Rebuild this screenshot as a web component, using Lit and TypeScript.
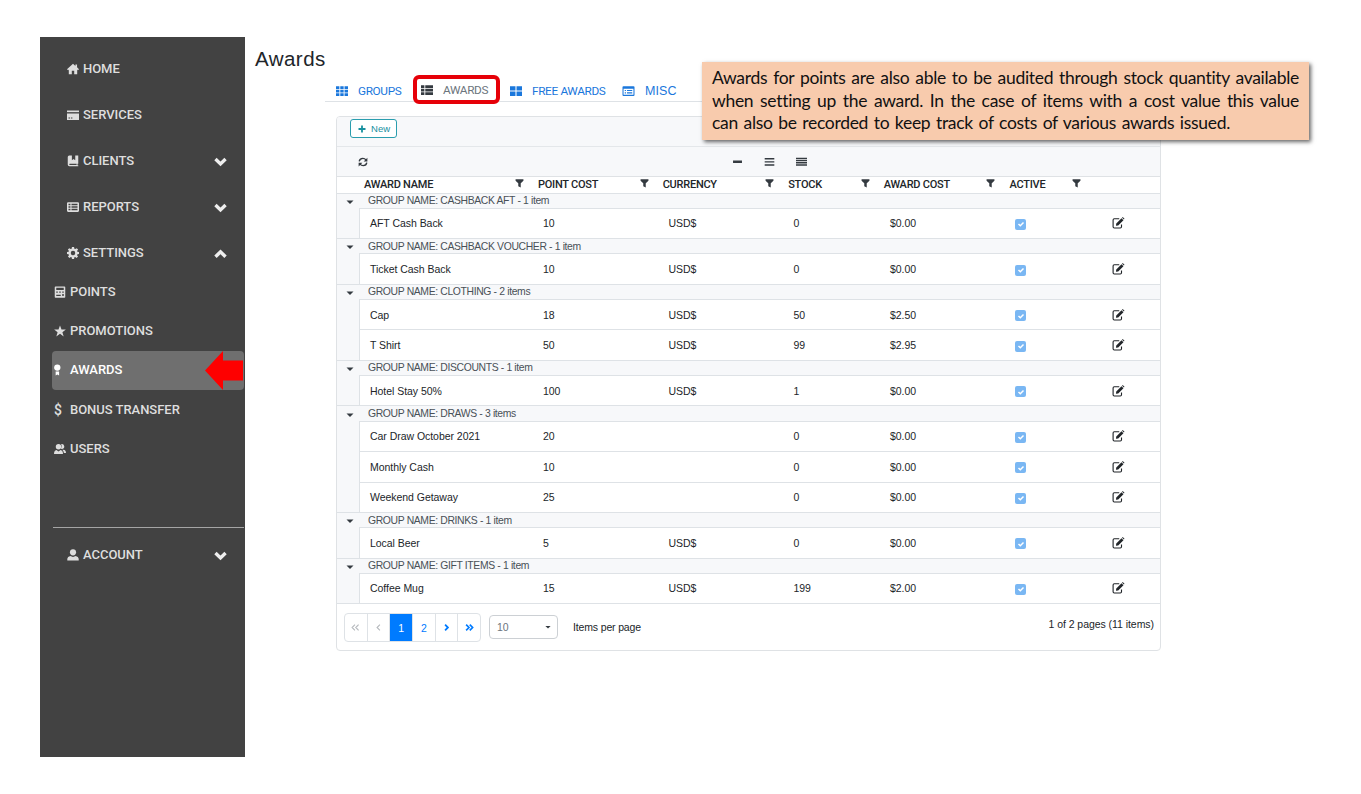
import { LitElement, html, css, svg } from "lit";
import { customElement } from "lit/decorators.js";

const icons: Record<string, any> = {
  home: svg`<path d="M8 1 0 8.2 1.4 9.6 2.4 8.7V15H6.4V10.2H9.6V15H13.6V8.7L14.6 9.6 16 8.2 13.4 5.8V2H11.2V3.9Z"/>`,
  card: svg`<path d="M0 2H16V4.2H0Z"/><path fill-rule="evenodd" d="M0 6H16V14.5H0ZM2 11.3V12.5H4V11.3ZM5.2 11.3V12.5H7.2V11.3Z"/>`,
  book: svg`<path fill-rule="evenodd" d="M3 0.5H6.5V7L8.7 5.2 11 7V0.5H15V11.5H14V13.5H15V15H3.2Q1 15 1 12.6V2.5Q1 .5 3 .5ZM3.4 11.7Q2.6 12.5 3.4 13.3H12.8V11.7Z"/>`,
  table: svg`<path fill-rule="evenodd" d="M1.5 1.5H14.5Q16 1.5 16 3V13Q16 14.5 14.5 14.5H1.5Q0 14.5 0 13V3Q0 1.5 1.5 1.5ZM2 3.7V5.7H4.6V3.7ZM6 3.7V5.7H14V3.7ZM2 7V9H4.6V7ZM6 7V9H14V7ZM2 10.4V12.4H4.6V10.4ZM6 10.4V12.4H14V10.4Z"/>`,
  gear: svg`<path fill-rule="evenodd" d="M6.6 0H9.4L9.8 2.2 11.1 2.8 13 1.5 14.8 3.3 13.4 5.2 13.9 6.4 16 6.7V9.3L13.9 9.7 13.4 10.9 14.7 12.8 12.8 14.7 11 13.3 9.8 13.8 9.4 16H6.6L6.2 13.8 5 13.3 3.2 14.7 1.3 12.8 2.6 10.9 2.1 9.7 0 9.3V6.7L2.1 6.4 2.6 5.2 1.2 3.3 3 1.5 4.9 2.8 6.2 2.2ZM8 5A3 3 0 1 0 8 11A3 3 0 1 0 8 5Z"/>`,
  calc: svg`<path fill-rule="evenodd" d="M2 0.5H14Q15 .5 15 1.5V14.5Q15 15.5 14 15.5H2Q1 15.5 1 14.5V1.5Q1 .5 2 .5ZM3 2.4V5.4H13V2.4ZM3 7.2V9H5V7.2ZM7 7.2V9H9V7.2ZM11 7.2V9H13V7.2ZM3 11.5V13.3H9V11.5ZM11 10.6V13.3H13V10.6Z"/>`,
  star: svg`<path d="M8 .5 10 6H15.8L11.2 9.5 12.9 15.2 8 11.8 3.1 15.2 4.8 9.5.2 6H6Z"/>`,
  award: svg`<circle cx="4.4" cy="4.8" r="4.2"/><path d="M2.2 10H6.8V15.2L4.5 14 2.2 15.2Z"/>`,
  users: svg`<circle cx="6" cy="5" r="3.6"/><path d="M0 14.5Q0 10 3.2 9.2L6 11.4 8.8 9.2Q12 10 12 14.5Z"/><path d="M9.6 1.4A3.3 3.3 0 1 1 11 8Q9.6 8 9.4 7.5 11 4.6 9.6 1.4ZM12.6 9Q16 9.6 16 13.4H13.2Q13 10.6 11 9Z"/>`,
  user: svg`<circle cx="8" cy="4.4" r="4.1"/><path d="M0.4 15.3V13Q.6 10 4.4 9.4L8 10.6 11.6 9.4Q15.4 10 15.6 13V15.3Z"/>`,
  down: svg`<path d="M1.8 5 8 11 14.2 5" fill="none" stroke="currentColor" stroke-width="4.2"/>`,
  up: svg`<path d="M1.8 12 8 6 14.2 12" fill="none" stroke="currentColor" stroke-width="4.2"/>`,
  grid9: svg`<path d="M0 1.5H4.5V5.3H0ZM5.7 1.5H10.2V5.3H5.7ZM11.4 1.5H16V5.3H11.4ZM0 6.2H4.5V10H0ZM5.7 6.2H10.2V10H5.7ZM11.4 6.2H16V10H11.4ZM0 10.9H4.5V14.6H0ZM5.7 10.9H10.2V14.6H5.7ZM11.4 10.9H16V14.6H11.4Z"/>`,
  list: svg`<path d="M0 1.5H4.5V5.3H0ZM5.7 1.5H16V5.3H5.7ZM0 6.2H4.5V10H0ZM5.7 6.2H16V10H5.7ZM0 10.9H4.5V14.6H0ZM5.7 10.9H16V14.6H5.7Z"/>`,
  grid4: svg`<path d="M0 1.5H7.3V7.3H0ZM8.7 1.5H16V7.3H8.7ZM0 8.7H7.3V14.5H0ZM8.7 8.7H16V14.5H8.7Z"/>`,
  misc: svg`<path fill-rule="evenodd" d="M1.3 1.5H14.7Q16 1.5 16 2.8V13.2Q16 14.5 14.7 14.5H1.3Q0 14.5 0 13.2V2.8Q0 1.5 1.3 1.5ZM1.4 5V13H14.6V5Z"/><path d="M3 6.6H4.6V8H3ZM6 6.6H13V8H6ZM3 9.8H4.6V11.2H3ZM6 9.8H13V11.2H6Z"/>`,
  plus: svg`<path d="M6.2 1H9.8V6.2H15V9.8H9.8V15H6.2V9.8H1V6.2H6.2Z"/>`,
  sync: svg`<path d="M2 7Q2.6 2.3 7.8 2.2 10.8 2.2 12.7 4.6M14 9Q13.4 13.7 8.2 13.8 5.2 13.8 3.3 11.4" fill="none" stroke="currentColor" stroke-width="2.2"/><path d="M15 1V7H9ZM1 15V9H7Z"/>`,
  minus: svg`<path d="M1.5 6.5H14.5V10H1.5Z"/>`,
  bars3: svg`<path d="M1 3H15V5H1ZM1 7.5H15V9.5H1ZM1 12H15V14H1Z"/>`,
  bars4: svg`<path d="M0 2.5H16V4.6H0ZM0 5.7H16V7.8H0ZM0 8.9H16V11H0ZM0 12.1H16V14.2H0Z"/>`,
  filter: svg`<path d="M1 .5H15V3L10.2 7.4V15L5.8 13V7.4L1 3Z"/>`,
  caret: svg`<path d="M1 5H15L8 12Z"/>`,
  edit: svg`<path d="M12 10V13Q12 14.6 10.4 14.6H2.4Q.8 14.6.8 13V4Q.8 2.4 2.4 2.4H9" fill="none" stroke="currentColor" stroke-width="1.5"/><path d="M5 8.6 12 1.6 14.6 4.2 7.6 11.2 4.6 11.6ZM12.7.9 13.6 0 16 2.4 15.2 3.4Z"/>`,
  check: svg`<path d="M3 8 6.6 11.4 13 5" fill="none" stroke="currentColor" stroke-width="3"/>`,
  left: svg`<path d="M10.5 3 5.5 8 10.5 13" fill="none" stroke="currentColor" stroke-width="2"/>`,
  left2: svg`<path d="M7 3 2 8 7 13M13.5 3 8.5 8 13.5 13" fill="none" stroke="currentColor" stroke-width="2"/>`,
  right: svg`<path d="M5.5 3 10.5 8 5.5 13" fill="none" stroke="currentColor" stroke-width="3.2"/>`,
  right2: svg`<path d="M2 3 7 8 2 13M8.5 3 13.5 8 8.5 13" fill="none" stroke="currentColor" stroke-width="3"/>`,
};

const icon = (name: string, cls = "") =>
  html`<svg class="ic ${cls}" viewBox="0 0 16 16" fill="currentColor">${icons[name]}</svg>`;

const base = css`
  * { box-sizing: border-box; }
  .ic { display: block; flex: none; width: 12px; height: 12px; }
`;

@customElement("side-nav")
class SideNav extends LitElement {
  static styles = [base, css`
    :host { display: flex; flex-direction: column; width: 205px; height: 720px; padding-top: 9px; background: #424242; color: #dedede; font: 500 13px/16px Roboto, sans-serif; letter-spacing: -.03px; }
    .main { display: flex; align-items: center; height: 46px; padding: 0 18px 0 27px; gap: 4px; }
    .main .arrow { width: 13px; height: 13px; margin-left: auto; color: #eee; }
    .sub { display: flex; align-items: center; height: 39.3px; margin: 0 1px 0 12px; padding-left: 2px; gap: 4px; border-radius: 4px; position: relative; }
    .first { margin-top: -4px; }
    .on { background: #6f6f6f; color: #fff; }
    .sym { width: 12px; font-size: 14px; }
    .pointer { position: absolute; right: 1px; top: 0; width: 38px; height: 39px; }
    .rule { height: 1px; margin: 59px 1px 4px 13px; background: #a5a5a5; }
  `];
  render() {
    const main = (i: string, t: string, a = "") =>
      html`<div class="main">${icon(i)}<span>${t}</span>${a ? icon(a, "arrow") : ""}</div>`;
    return html`
      ${main("home", "HOME")}${main("card", "SERVICES")}${main("book", "CLIENTS", "down")}
      ${main("table", "REPORTS", "down")}${main("gear", "SETTINGS", "up")}
      <div class="sub first">${icon("calc")}<span>POINTS</span></div>
      <div class="sub">${icon("star")}<span>PROMOTIONS</span></div>
      <div class="sub on">${icon("award")}<span>AWARDS</span>
        <svg class="pointer" viewBox="0 0 38 39"><path d="M0 19.5 18 0V9.5H38V29.5H18V39Z" fill="#fe0000"/></svg></div>
      <div class="sub"><span class="sym">$</span><span>BONUS TRANSFER</span></div>
      <div class="sub">${icon("users")}<span>USERS</span></div>
      <div class="rule"></div>
      ${main("user", "ACCOUNT", "down")}`;
  }
}

type Row = [string, string, string, string, string];
const groups: { name: string; rows: Row[] }[] = [
  { name: "CASHBACK AFT", rows: [["AFT Cash Back", "10", "USD$", "0", "$0.00"]] },
  { name: "CASHBACK VOUCHER", rows: [["Ticket Cash Back", "10", "USD$", "0", "$0.00"]] },
  { name: "CLOTHING", rows: [["Cap", "18", "USD$", "50", "$2.50"], ["T Shirt", "50", "USD$", "99", "$2.95"]] },
  { name: "DISCOUNTS", rows: [["Hotel Stay 50%", "100", "USD$", "1", "$0.00"]] },
  { name: "DRAWS", rows: [["Car Draw October 2021", "20", "", "0", "$0.00"], ["Monthly Cash", "10", "", "0", "$0.00"], ["Weekend Getaway", "25", "", "0", "$0.00"]] },
  { name: "DRINKS", rows: [["Local Beer", "5", "USD$", "0", "$0.00"]] },
  { name: "GIFT ITEMS", rows: [["Coffee Mug", "15", "USD$", "199", "$2.00"]] },
];

@customElement("awards-table")
class AwardsTable extends LitElement {
  static styles = [base, css`
    :host { display: flex; flex-direction: column; width: 825px; height: 535px; border: 1px solid #dfe2e5; border-radius: 4px; background: #fff; color: #212529; font: 10.5px/14px "Liberation Sans", Arial, sans-serif; overflow: hidden; }
    .tools { height: 30px; padding: 2px 13px; background: #f7f8fa; border-bottom: 1px solid #e4e7ea; }
    .new { display: flex; align-items: center; gap: 5px; width: 47px; height: 19px; padding-left: 7px; border: 1px solid #2a9dae; border-radius: 3px; color: #17909f; background: #fff; font-size: 9.5px; letter-spacing: .1px; }
    .new .ic { width: 8px; height: 8px; }
    .view { display: flex; align-items: center; height: 30px; padding-left: 21px; background: #f7f8fa; border-bottom: 1px solid #dfe2e5; color: #343a40; }
    .view .ic { width: 11px; height: 11px; margin-right: 21px; }
    .view .sync { width: 10px; height: 10px; margin-right: 364px; }
    .head, .row { display: grid; align-items: center; }
    .head { grid-template-columns: 174px 124.7px 125.5px 95.5px 125.8px 86px; height: 15.5px; padding-left: 27px; font: 500 11px/15px Roboto, sans-serif; letter-spacing: -.25px; }
    .head div { display: flex; align-items: center; justify-content: space-between; padding-right: 14px; }
    .head .ic { width: 9px; height: 9px; margin-top: -2px; color: #343a40; }
    .group { display: flex; height: 15.3px; background: #f7f8fa; border-top: 1px solid #dee2e6; color: #495057; font-size: 10.4px; letter-spacing: -.36px; align-items: center; padding: 1px 0 0 9px; gap: 14px; white-space: pre; }
    .group .ic { width: 8px; height: 8px; margin-top: 1px; color: #343a40; }
    .body { background: #f7f8fa; padding-left: 22px; }
    .row { grid-template-columns: 173px 125.5px 125px 96.5px 125px 97px 1fr; height: 30.36px; padding-left: 10px; background: #fff; border-top: 1px solid #dee2e6; border-left: 1px solid #dee2e6; font-size: 10.5px; letter-spacing: -.04px; }
    .row > .ic { width: 13px; height: 12px; }
    .box { display: flex; align-items: center; justify-content: center; width: 11px; height: 11px; margin-top: 2px; border-radius: 2px; background: #7ab7f3; color: #fff; }
    .box .ic { width: 8px; height: 8px; }
    .foot { display: flex; flex: 1; padding: 9px 6px 0 7px; border-top: 1px solid #dee2e6; }
    .pages { display: flex; width: 137px; height: 29px; border: 1px solid #dee2e6; border-radius: 4px; overflow: hidden; color: #007bff; }
    .pg { display: flex; flex: 1; align-items: center; justify-content: center; border-right: 1px solid #dee2e6; }
    .pg:last-child { border-right: 0; }
    .pg .ic { width: 9px; height: 9px; }
    .off { color: #b5b9bd; }
    .cur { background: #007bff; color: #fff; }
    .size { display: flex; align-items: center; justify-content: space-between; width: 69px; height: 24px; margin: 2px 15px 0 8px; padding: 0 6px 0 7px; border: 1px solid #ccd0d4; border-radius: 4px; color: #6c757d; }
    .size .ic { width: 6px; height: 6px; color: #343a40; }
    .per { margin-top: 7px; letter-spacing: -.15px; }
    .total { margin: 4px 0 0 auto; letter-spacing: -.05px; }
  `];
  render() {
    return html`
      <div class="tools"><div class="new">${icon("plus")}New</div></div>
      <div class="view">${icon("sync", "sync")}${icon("minus")}${icon("bars3")}${icon("bars4")}</div>
      <div class="head">${["AWARD NAME", "POINT COST", "CURRENCY", "STOCK", "AWARD COST", "ACTIVE"].map((h) => html`<div><span>${h}</span>${icon("filter")}</div>`)}</div>
      ${groups.map((g) => html`
        <div class="group">${icon("caret")}<span>GROUP NAME: ${g.name} - ${g.rows.length} item${g.rows.length > 1 ? "s" : ""}</span></div>
        <div class="body">${g.rows.map((r) => html`
          <div class="row">${r.map((c) => html`<span>${c}</span>`)}<span class="box">${icon("check")}</span>${icon("edit")}</div>`)}</div>`)}
      <div class="foot">
        <div class="pages">
          <span class="pg off">${icon("left2")}</span><span class="pg off">${icon("left")}</span>
          <span class="pg cur">1</span><span class="pg">2</span>
          <span class="pg">${icon("right")}</span><span class="pg">${icon("right2")}</span>
        </div>
        <div class="size">10${icon("caret")}</div>
        <span class="per">Items per page</span>
        <span class="total">1 of 2 pages (11 items)</span>
      </div>`;
  }
}

@customElement("app-root")
class AppRoot extends LitElement {
  static styles = [base, css`
    :host { display: flex; position: relative; width: 1361px; height: 794px; padding: 37px 0 0 40px; background: #fff; overflow: hidden; font-family: "Liberation Sans", Arial, sans-serif; }
    .content { display: flex; flex-direction: column; width: 920px; padding-left: 10px; }
    h1 { margin: 9px 0 0; font-size: 20.5px; line-height: 26px; font-weight: 400; letter-spacing: .45px; color: #212529; }
    .tabs { display: flex; align-items: center; height: 30px; margin: 0 0 14px 70px; padding-left: 11px; border-bottom: 1px solid #dee2e6; color: #1a77dc; font: 11.8px/14px Roboto, sans-serif; letter-spacing: -.35px; }
    .tab { display: flex; align-items: center; gap: 10px; padding-top: 8px; }
    .tab .ic { width: 12px; height: 12px; }
    .groups { width: 77px; }
    .active { width: 87px; height: 29px; margin: 5px 10px 0 0; padding: 2px 0 0 4px; border: 4px solid #e60008; border-radius: 6px; color: #6c757d; }
    .active .ic { color: #343a40; }
    .free { width: 112px; }
    .misc { font: 12.5px/14px "Liberation Sans", Arial, sans-serif; letter-spacing: .1px; }
    .misc .ic { width: 13px; height: 12px; }
    awards-table { margin-left: 81px; }
    .note { position: absolute; left: 702px; top: 62px; width: 607px; height: 78px; padding: 5px 10px; background: #f8cbad; box-shadow: 2px 2px 4px rgba(0,0,0,.6); color: #111; font: 17.5px/22.7px Lato, sans-serif; }
    .note div { white-space: nowrap; text-align: justify; text-align-last: justify; letter-spacing: -.3px; }
    .note .end { width: 518px; letter-spacing: -.3px; }
  `];
  render() {
    return html`
      <side-nav></side-nav>
      <div class="content">
        <h1>Awards</h1>
        <div class="tabs">
          <div class="tab groups">${icon("grid9")}GROUPS</div>
          <div class="tab active">${icon("list")}AWARDS</div>
          <div class="tab free">${icon("grid4")}FREE AWARDS</div>
          <div class="tab misc">${icon("misc")}MISC</div>
        </div>
        <awards-table></awards-table>
      </div>
      <div class="note">
        <div>Awards for points are also able to be audited through stock quantity available</div>
        <div>when setting up the award. In the case of items with a cost value this value</div>
        <div class="end">can also be recorded to keep track of costs of various awards issued.</div>
      </div>`;
  }
}
